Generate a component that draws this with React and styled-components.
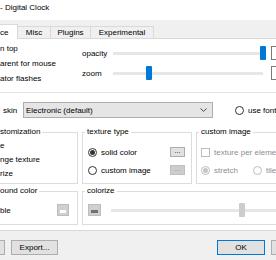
import styled, { createGlobalStyle } from "styled-components";

const GlobalStyle = createGlobalStyle`
    html, body {
        margin: 0;
        padding: 0;
        background: #f0f0f0;
        overflow: hidden;
    }
    body {
        font-family: "Liberation Sans", Arial, sans-serif;
        font-size: 8px;
        color: #000;
    }
`

const Window = styled.div`
    width: 340px;
    height: 260px;
    margin-left: -8px;
    background: #f0f0f0;
`

const TitleBar = styled.div`
    height: 20px;
    line-height: 16px;
    padding-left: 8px;
    background: #fff;
`

const DialogBody = styled.div`
    padding-top: 4px;
`

const TabStrip = styled.div`
    display: flex;
    align-items: flex-end;
    height: 15px;
    margin-bottom: -1px;
    position: relative;
    z-index: 1;
`

const Tab = styled.div`
    box-sizing: border-box;
    width: ${p => p.$w}px;
    height: ${p => (p.$active ? 15 : 13)}px;
    display: flex;
    align-items: center;
    justify-content: ${p => (p.$first ? "flex-start" : "center")};
    padding-left: ${p => (p.$first ? 8 : 0)}px;
    background: ${p => (p.$active ? "#fff" : "#f0f0f0")};
    border: 1px solid #d9d9d9;
    border-left: ${p => (p.$first ? "none" : "1px solid #d9d9d9")};
    border-bottom: ${p => (p.$active ? "none" : "1px solid #d9d9d9")};
    margin-left: ${p => (p.$first ? 0 : -1)}px;
`

const Page = styled.div`
    box-sizing: border-box;
    height: 193px;
    margin-left: 2px;
    background: #fff;
    border: 1px solid #d9d9d9;
`

const TopSection = styled.div`
    display: flex;
    height: 53px;
`

const LeftChecks = styled.div`
    width: 82px;
    padding: 2px 0 0 5px;
    line-height: 15px;
`

const Sliders = styled.div`
    display: flex;
    flex-direction: column;
    gap: 6px;
    padding-top: 7px;
`

const SliderRow = styled.div`
    display: flex;
    align-items: center;
    height: 14px;
`

const SliderLabel = styled.span`
    width: 31px;
`

const Track = styled.div`
    position: relative;
    width: ${p => p.$w}px;
    height: 3px;
    margin-left: ${p => p.$ml || 0}px;
    background: #e6e6e6;
    flex: none;
`

const Thumb = styled.div`
    position: absolute;
    top: -6px;
    left: ${p => p.$at - 3}px;
    width: 6px;
    height: 14px;
    border-radius: 1px;
    background: ${p => (p.$muted ? "#cdcdcd" : "#0078d7")};
`

const EditBox = styled.div`
    box-sizing: border-box;
    width: 20px;
    height: 14px;
    margin-left: 8px;
    background: #fff;
    border: 1px solid #7a7a7a;
`

const Separator = styled.div`
    height: 1px;
    background: #e3e3e3;
`

const SkinRow = styled.div`
    display: flex;
    align-items: center;
    height: 16px;
    margin-top: 9px;
    padding-left: 8px;
`

const SkinLabel = styled.span`
    width: 20px;
`

const Combo = styled.div`
    box-sizing: border-box;
    display: flex;
    align-items: center;
    justify-content: space-between;
    width: 190px;
    height: 16px;
    padding: 0 5px 0 2px;
    background: #e5e5e5;
    border: 1px solid #adadad;
`

const Option = styled.label`
    display: flex;
    align-items: center;
    gap: 4px;
    margin-left: ${p => p.$ml || 0}px;
    width: ${p => (p.$w ? `${p.$w}px` : "auto")};
    color: ${p => (p.$disabled ? "#8d8d8d" : "#000")};
`

const Radio = styled.span`
    box-sizing: border-box;
    width: 9px;
    height: 9px;
    flex: none;
    display: inline-flex;
    align-items: center;
    justify-content: center;
    border-radius: 50%;
    background: #fff;
    border: 1px solid ${p => (p.$disabled ? "#bcbcbc" : "#333")};

    &::after {
        content: "";
        display: ${p => (p.$checked ? "block" : "none")};
        width: 5px;
        height: 5px;
        border-radius: 50%;
        background: ${p => (p.$disabled ? "#c4c4c4" : "#333")};
    }
`

const Check = styled.span`
    box-sizing: border-box;
    width: 9px;
    height: 9px;
    flex: none;
    background: #fff;
    border: 1px solid ${p => (p.$disabled ? "#bcbcbc" : "#333")};
`

const GroupRow = styled.div`
    display: grid;
    grid-template-columns: ${p => p.$cols};
    column-gap: 4px;
    height: ${p => p.$h}px;
    margin-top: ${p => p.$mt}px;
`

const Group = styled.fieldset`
    box-sizing: border-box;
    min-width: 0;
    height: 100%;
    margin: 0;
    padding: 0;
    border: 1px solid #dcdcdc;
    overflow: hidden;

    legend {
        margin-left: 2px;
        padding: 0 2px;
        line-height: 10px;
    }
`

const GroupBody = styled.div`
    padding: ${p => p.$pad};
`

const Line = styled.div`
    display: flex;
    align-items: center;
    justify-content: ${p => (p.$start ? "flex-start" : "space-between")};
    height: ${p => p.$h}px;
`

const DotsButton = styled.div`
    box-sizing: border-box;
    width: 15px;
    height: 10px;
    display: flex;
    align-items: center;
    justify-content: center;
    font-size: 7px;
    line-height: 6px;
    padding-bottom: 2px;
    color: ${p => (p.$disabled ? "#8d8d8d" : "#000")};
    background: ${p => (p.$disabled ? "#cccccc" : "#e1e1e1")};
    border: 1px solid ${p => (p.$disabled ? "#bfbfbf" : "#adadad")};
`

const Swatch = styled.div`
    box-sizing: border-box;
    width: ${p => p.$w}px;
    height: 12px;
    flex: none;
    display: flex;
    align-items: flex-end;
    padding: 0 2px 2px;
    background: #cfcfcf;
    border: 1px solid #bdbdbd;

    &::after {
        content: "";
        flex: 1;
        height: 3px;
        background: ${p => p.$color};
    }
`

const Footer = styled.div`
    display: flex;
    justify-content: space-between;
    padding: 9px 13px 0 0;
`

const ButtonGroup = styled.div`
    display: flex;
    gap: 6px;
`

const Button = styled.div`
    box-sizing: border-box;
    width: ${p => p.$w || 48}px;
    height: 15px;
    display: flex;
    align-items: center;
    justify-content: center;
    background: #e1e1e1;
    border: 1px solid ${p => (p.$default ? "#0078d7" : "#adadad")};
`

const Chevron = () => (
    <svg width="7" height="4" viewBox="0 0 7 4">
        <path d="M0.5 0.5 L3.5 3.3 L6.5 0.5" fill="none" stroke="#444" strokeWidth="1" />
    </svg>
)

export default function App() {
    return (
        <Window>
            <GlobalStyle />
            <TitleBar>- Digital Clock</TitleBar>
            <DialogBody>
                <TabStrip>
                    <Tab $w={26} $active $first>ce</Tab>
                    <Tab $w={34}>Misc</Tab>
                    <Tab $w={41}>Plugins</Tab>
                    <Tab $w={64}>Experimental</Tab>
                </TabStrip>
                <Page>
                    <TopSection>
                        <LeftChecks>
                            <div>n top</div>
                            <div>arent for mouse</div>
                            <div>ator flashes</div>
                        </LeftChecks>
                        <Sliders>
                            <SliderRow>
                                <SliderLabel>opacity</SliderLabel>
                                <Track $w={150}>
                                    <Thumb $at={150} />
                                </Track>
                                <EditBox />
                            </SliderRow>
                            <SliderRow>
                                <SliderLabel>zoom</SliderLabel>
                                <Track $w={150}>
                                    <Thumb $at={36} />
                                </Track>
                                <EditBox />
                            </SliderRow>
                        </Sliders>
                    </TopSection>
                    <Separator />
                    <SkinRow>
                        <SkinLabel>skin</SkinLabel>
                        <Combo>
                            <span>Electronic (default)</span>
                            <Chevron />
                        </Combo>
                        <Option $ml={22}>
                            <Radio />
                            use font
                        </Option>
                    </SkinRow>

                    <GroupRow $cols="83px 110px 1fr" $h={57} $mt={9}>
                        <Group>
                            <legend>stomization</legend>
                            <GroupBody $pad="1px 0 0 4px">
                                <Line $h={14}>e</Line>
                                <Line $h={14}>nge texture</Line>
                                <Line $h={14}>rize</Line>
                            </GroupBody>
                        </Group>
                        <Group>
                            <legend>texture type</legend>
                            <GroupBody $pad="6px 6px 0 5px">
                                <Line $h={18}>
                                    <Option>
                                        <Radio $checked />
                                        solid color
                                    </Option>
                                    <DotsButton>...</DotsButton>
                                </Line>
                                <Line $h={18}>
                                    <Option>
                                        <Radio />
                                        custom image
                                    </Option>
                                    <DotsButton $disabled>...</DotsButton>
                                </Line>
                            </GroupBody>
                        </Group>
                        <Group>
                            <legend>custom image</legend>
                            <GroupBody $pad="6px 0 0 4px">
                                <Line $h={18} $start>
                                    <Option $disabled>
                                        <Check $disabled />
                                        texture per element
                                    </Option>
                                </Line>
                                <Line $h={18} $start>
                                    <Option $disabled $w={52}>
                                        <Radio $disabled $checked />
                                        stretch
                                    </Option>
                                    <Option $disabled>
                                        <Radio $disabled />
                                        tile
                                    </Option>
                                </Line>
                            </GroupBody>
                        </Group>
                    </GroupRow>

                    <GroupRow $cols="83px 1fr" $h={39} $mt={2}>
                        <Group>
                            <legend>ound color</legend>
                            <GroupBody $pad="7px 8px 0 4px">
                                <Line $h={14}>
                                    ble
                                    <Swatch $w={12} $color="#ffffff" />
                                </Line>
                            </GroupBody>
                        </Group>
                        <Group>
                            <legend>colorize</legend>
                            <GroupBody $pad="7px 0 0 5px">
                                <Line $h={14} $start>
                                    <Swatch $w={13} $color="#707070" />
                                    <Track $w={220} $ml={10}>
                                        <Thumb $at={131} $muted />
                                    </Track>
                                </Line>
                            </GroupBody>
                        </Group>
                    </GroupRow>
                </Page>
                <Footer>
                    <ButtonGroup>
                        <Button $w={13} />
                        <Button $w={47}>Export...</Button>
                    </ButtonGroup>
                    <ButtonGroup>
                        <Button $default>OK</Button>
                        <Button>Cancel</Button>
                    </ButtonGroup>
                </Footer>
            </DialogBody>
        </Window>
    )
}
